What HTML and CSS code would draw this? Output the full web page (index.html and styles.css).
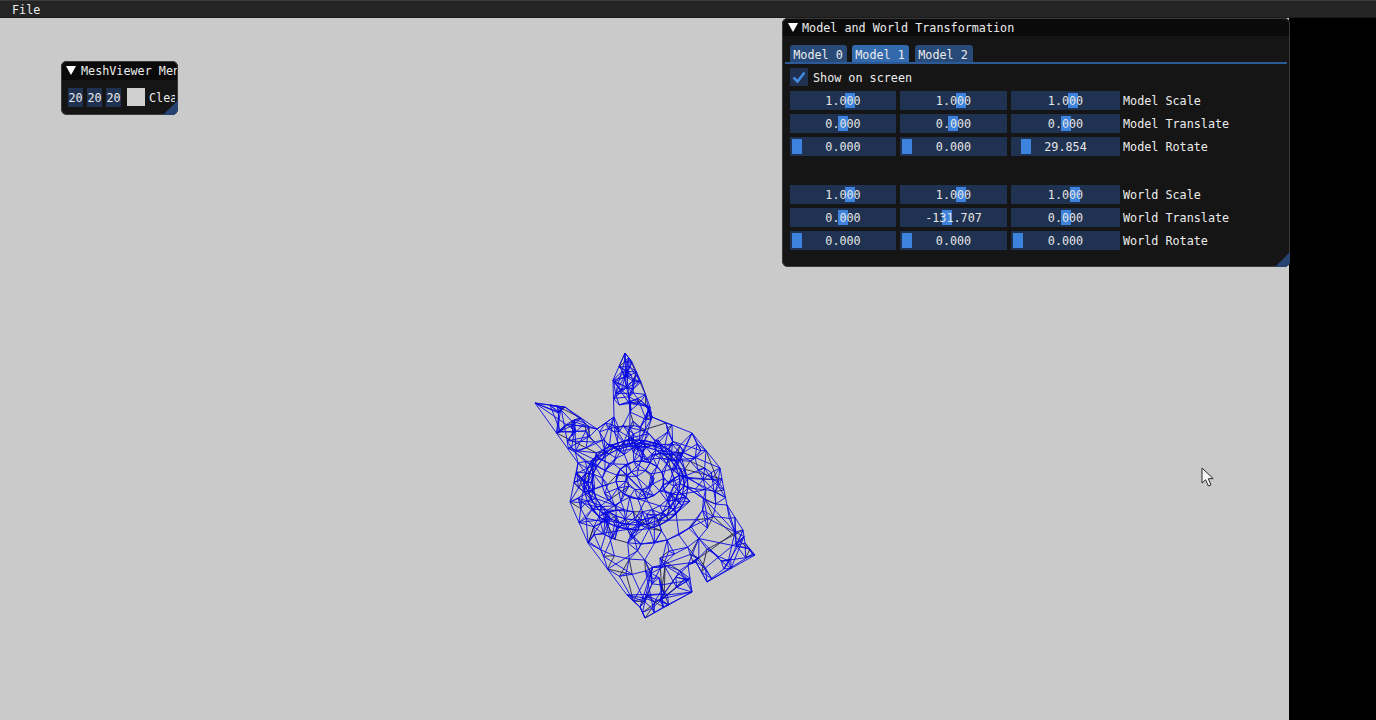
FILE: index.html
```html
<!DOCTYPE html>
<html lang="en">
<head>
<meta charset="utf-8">
<title>MeshViewer</title>
<link rel="stylesheet" href="styles.css">
</head>
<body>
<div class="app">
  <div class="menubar"><span class="menu-item">File</span></div>
  <div class="stage">
    <svg id="mesh" class="mesh" width="240" height="280" viewBox="525 345 240 280" aria-hidden="true"></svg>

    <section class="win win-mini">
      <header class="titlebar"><span class="arrow"></span><span class="title">MeshViewer Menu</span></header>
      <div class="mini-row">
        <span class="mini-field">20</span>
        <span class="mini-field">20</span>
        <span class="mini-field">20</span>
        <span class="swatch"></span>
        <span class="mini-clear">Clear</span>
      </div>
      <span class="grip"></span>
    </section>

    <section class="win win-main">
      <header class="titlebar"><span class="arrow"></span><span class="title">Model and World Transformation</span></header>
      <nav class="tabs">
        <span class="tab">Model 0</span>
        <span class="tab active">Model 1</span>
        <span class="tab">Model 2</span>
      </nav>
      <label class="check-row">
        <span class="checkbox">
          <svg width="18" height="18" viewBox="0 0 18 18"><path d="M3.5 9.5 L7.5 13.5 L14.5 4.5" fill="none" stroke="#4289e2" stroke-width="2.6"/></svg>
        </span>
        <span class="check-label">Show on screen</span>
      </label>
      <div class="group">
        <div class="cell"><i class="knob" style="left:55px"></i><b>1.000</b></div>
        <div class="cell"><i class="knob" style="left:56px"></i><b>1.000</b></div>
        <div class="cell"><i class="knob" style="left:57px"></i><b>1.000</b></div>
        <span class="lab">Model Scale</span>
        <div class="cell"><i class="knob" style="left:48px"></i><b>0.000</b></div>
        <div class="cell"><i class="knob" style="left:48px"></i><b>0.000</b></div>
        <div class="cell"><i class="knob" style="left:50px"></i><b>0.000</b></div>
        <span class="lab">Model Translate</span>
        <div class="cell"><i class="knob" style="left:2px"></i><b>0.000</b></div>
        <div class="cell"><i class="knob" style="left:2px"></i><b>0.000</b></div>
        <div class="cell"><i class="knob" style="left:10px"></i><b>29.854</b></div>
        <span class="lab">Model Rotate</span>
      </div>
      <div class="group group-world">
        <div class="cell"><i class="knob" style="left:55px"></i><b>1.000</b></div>
        <div class="cell"><i class="knob" style="left:56px"></i><b>1.000</b></div>
        <div class="cell"><i class="knob" style="left:59px"></i><b>1.000</b></div>
        <span class="lab">World Scale</span>
        <div class="cell"><i class="knob" style="left:48px"></i><b>0.000</b></div>
        <div class="cell"><i class="knob" style="left:42px"></i><b>-131.707</b></div>
        <div class="cell"><i class="knob" style="left:50px"></i><b>0.000</b></div>
        <span class="lab">World Translate</span>
        <div class="cell"><i class="knob" style="left:2px"></i><b>0.000</b></div>
        <div class="cell"><i class="knob" style="left:2px"></i><b>0.000</b></div>
        <div class="cell"><i class="knob" style="left:2px"></i><b>0.000</b></div>
        <span class="lab">World Rotate</span>
      </div>
      <span class="grip"></span>
    </section>

    <svg class="cursor" width="14" height="21" viewBox="0 0 14 21" aria-hidden="true">
      <path d="M1 1 L1 16 L4.6 12.8 L7.4 19 L10 17.8 L7.3 11.8 L12.2 11.6 Z" fill="#f4f4f4" stroke="#2a2a2a" stroke-width="1"/>
    </svg>
  </div>
</div>
<script src="script.js"></script>
</body>
</html>
```
FILE: styles.css
```css
* { box-sizing: border-box; }
html, body { margin: 0; padding: 0; height: 100%; background: #000; overflow: hidden; }
body {
  font-family: "DejaVu Sans Mono", "Liberation Mono", monospace;
  font-size: 11.75px;
  color: #ececec;
}
.app { width: 1376px; height: 720px; display: flex; flex-direction: column; }
.menubar {
  height: 18px;
  flex: none;
  background: #242424;
  border-top: 1px solid #3a3a3a;
  border-bottom: 1px solid #1a1a1a;
  padding-left: 12px;
  line-height: 19px;
}
.stage { position: relative; flex: 1; width: 1289px; background: #cacaca; }
.mesh { position: absolute; left: 525px; top: 327px; }
.win { position: absolute; background: #151515; border-radius: 6px; overflow: hidden; outline: 1px solid #3a3a3a; outline-offset: -1px; }
.win-main { left: 782px; top: 0; width: 508px; height: 249px; }
.win-mini { left: 61px; top: 43px; width: 117px; height: 54px; }
.titlebar { height: 18px; background: #0a0a0a; display: flex; align-items: center; padding-left: 6px; white-space: nowrap; }
.title { padding-top: 1px; }
.win-mini .titlebar { height: 19px; padding-left: 5px; }
.arrow {
  width: 0; height: 0; flex: none; margin-right: 4px;
  border-left: 5px solid transparent;
  border-right: 5px solid transparent;
  border-top: 9px solid #fff;
}
.win-mini .arrow { margin-right: 5px; }
.tabs {
  display: flex; gap: 5px; margin: 9px 3px 0; padding: 0 0 0 5px;
  height: 19px; border-bottom: 2px solid #2c5a96;
}
.tab {
  width: 57px; height: 17px; padding-right: 1px; background: #284a78; border-radius: 3px 3px 0 0;
  text-align: center; line-height: 20px;
}
.tab.active { background: #3369ad; }
.tab:last-child { width: 58px; margin-left: 1px; padding-right: 2px; }
.check-row { display: flex; align-items: center; gap: 5px; margin: 4px 0 0 8px; height: 18px; }
.check-label { padding-top: 2px; }
.checkbox { width: 18px; height: 18px; background: #20314f; display: block; }
.checkbox svg { display: block; }
.group {
  display: grid; grid-template-columns: 106px 107px 109px 1fr;
  column-gap: 4px; row-gap: 4px; grid-auto-rows: 19px;
  margin: 5px 0 0 8px;
}
.group-world { margin-top: 29px; }
.cell { position: relative; background: #203252; text-align: center; line-height: 20px; }
.cell b { position: relative; font-weight: normal; color: #e4e4e4; }
.knob { position: absolute; top: 2px; width: 10px; height: 15px; background: #3d82dc; }
.lab { margin-left: -1px; line-height: 21px; white-space: nowrap; }
.grip {
  position: absolute; right: 0; bottom: 0; width: 15px; height: 15px;
  background: #26436f; clip-path: polygon(100% 0, 100% 100%, 0 100%);
}
.mini-row { display: flex; align-items: flex-start; margin: 8px 0 0 7px; white-space: nowrap; width: 107px; overflow: hidden; }
.mini-field { width: 15px; height: 19px; background: #203252; text-align: center; line-height: 20px; margin-right: 4px; flex: none; }
.swatch { width: 18px; height: 18px; background: #cfcfcf; flex: none; margin: 0 4px 0 2px; }
.mini-clear { line-height: 20px; flex: none; }
.cursor { position: absolute; left: 1201px; top: 449px; }
```
FILE: script.js
```js
// Builds the wireframe rabbit: a seeded point cloud joined to nearby and further neighbours,
// with the head's rings drawn as explicit bands.
(function () {
  var outline = [[625,353],[632,362],[641,382],[650,407],[652,417],[692,433],[720,468],[724,490],[727,505],[743,530],[745,543],[755,555],[707,582],[696,562],[688,565],[692,592],[645,618],[640,607],[627,595],[588,543],[570,502],[578,463],[535,403],[565,407],[597,429],[614,417],[613,380]];
  var seed = 1337;
  function rnd() { seed = (seed * 1664525 + 1013904223) >>> 0; return seed / 4294967296; }
  function inside(x, y) {
    var c = false;
    for (var i = 0, j = outline.length - 1; i < outline.length; j = i++) {
      var a = outline[i], b = outline[j];
      if ((a[1] > y) !== (b[1] > y) && x < (b[0] - a[0]) * (y - a[1]) / (b[1] - a[1]) + a[0]) c = !c;
    }
    return c;
  }
  function seg(a, b) {
    return "M" + a[0].toFixed(1) + " " + a[1].toFixed(1) + "L" + b[0].toFixed(1) + " " + b[1].toFixed(1);
  }
  var pts = outline.slice();
  var i, j, t, ringPath = "";
  for (i = 0; i < outline.length; i++) {
    var p = outline[i], q = outline[(i + 1) % outline.length];
    pts.push([(p[0] + q[0]) / 2, (p[1] + q[1]) / 2]);
  }
  // [cx, cy, rx, ry, points, drawn as a visible band?]
  [[640,480,14,10,12,0],[640,480,24,19,18,1],[638,482,36,30,24,0],[636,483,44,37,28,1],[636,484,48,41,30,1],[636,485,52,45,30,1],[642,494,64,50,30,0],[642,500,74,60,30,0]].forEach(function (r) {
    var prev = null, first = null;
    for (t = 0; t <= r[4]; t++) {
      var a = t / r[4] * 2 * Math.PI + r[2];
      var pt = [r[0] + r[2] * Math.cos(a), r[1] + r[3] * Math.sin(a)];
      if (t < r[4] && inside(pt[0], pt[1])) pts.push(pt);
      if (r[5] && prev) ringPath += seg(prev, pt);
      prev = pt;
    }
  });
  function scatter(x0, y0, w, h, count) {
    var n = 0;
    while (n < count) {
      var x = x0 + rnd() * w, y = y0 + rnd() * h;
      if (inside(x, y)) { pts.push([x, y]); n++; }
    }
  }
  scatter(530, 350, 230, 270, 70);
  scatter(610, 355, 45, 75, 30);   // upper ear
  scatter(535, 403, 65, 60, 26);   // left ear
  scatter(640, 550, 115, 70, 36);  // feet
  scatter(595, 425, 90, 30, 22);   // top of head
  scatter(600, 440, 80, 80, 16);   // head centre

  var seen = {}, d = "", dark = "";
  function edge(i, j) {
    var k = i < j ? i + "_" + j : j + "_" + i;
    if (seen[k]) return;
    seen[k] = 1;
    var a = pts[i], b = pts[j];
    for (var s = 1; s < 6; s++) {
      if (!inside(a[0] + (b[0] - a[0]) * s / 6, a[1] + (b[1] - a[1]) * s / 6)) return;
    }
    if (rnd() < 0.1) dark += seg(a, b); else d += seg(a, b);
  }
  for (i = 0; i < pts.length; i++) {
    var near = [];
    for (j = 0; j < pts.length; j++) if (j !== i) {
      var dx = pts[i][0] - pts[j][0], dy = pts[i][1] - pts[j][1];
      near.push([dx * dx + dy * dy, j]);
    }
    near.sort(function (u, v) { return u[0] - v[0]; });
    for (j = 0; j < 4; j++) edge(i, near[j][1]);
    edge(i, near[5 + Math.floor(rnd() * 25)][1]);
  }
  var svg = document.getElementById("mesh");
  function add(data, colour, width) {
    var path = document.createElementNS("http://www.w3.org/2000/svg", "path");
    path.setAttribute("d", data);
    path.setAttribute("fill", "none");
    path.setAttribute("stroke", colour);
    path.setAttribute("stroke-width", width);
    svg.appendChild(path);
  }
  add(dark, "#20204a", "0.9");
  add(d, "#0808e4", "0.9");
  add(ringPath, "#0808e4", "1.1");
  var edgePath = "";
  for (i = 0; i < outline.length; i++) {
    edgePath += seg(outline[i], outline[(i + 1) % outline.length]);
  }
  add(edgePath, "#0808e4", "0.9");
})();
```
